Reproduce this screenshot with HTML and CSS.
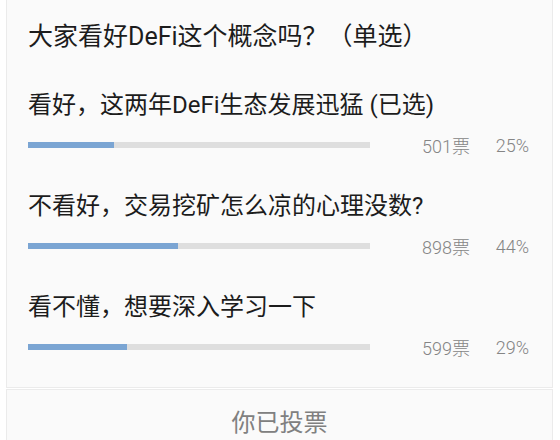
FILE: index.html
```html
<!DOCTYPE html>
<html lang="zh-CN">
<head>
    <meta charset="UTF-8">
    <meta name="viewport" content="width=device-width, initial-scale=1.0">
    <title>投票</title>
    <link rel="stylesheet" href="styles.css">
</head>
<body>
    <div class="poll">
        <div class="poll-card">
            <h1 class="poll-title">大家看好DeFi这个概念吗？（单选）</h1>

            <div class="option">
                <div class="option-text">看好，这两年DeFi生态发展迅猛 (已选)</div>
                <div class="option-stats">
                    <div class="track"><div class="fill" style="width: 25%"></div></div>
                    <span class="votes">501票</span>
                    <span class="percent">25%</span>
                </div>
            </div>

            <div class="option">
                <div class="option-text">不看好，交易挖矿怎么凉的心理没数?</div>
                <div class="option-stats">
                    <div class="track"><div class="fill" style="width: 44%"></div></div>
                    <span class="votes">898票</span>
                    <span class="percent">44%</span>
                </div>
            </div>

            <div class="option">
                <div class="option-text">看不懂，想要深入学习一下</div>
                <div class="option-stats">
                    <div class="track"><div class="fill" style="width: 29%"></div></div>
                    <span class="votes">599票</span>
                    <span class="percent">29%</span>
                </div>
            </div>
        </div>
        <div class="poll-footer">你已投票</div>
    </div>
</body>
</html>
```

FILE: styles.css
```css
body {
    margin: 0;
    padding: 0;
    background-color: #fff;
    font-family: Roboto, "Noto Sans CJK SC", sans-serif;
    color: #1c1c1c;
}
.poll {
    width: 547px;
    margin-left: 6px;
}
.poll-card {
    background-color: #fafafa;
    border: 1px solid #ebebeb;
    border-top: none;
    padding: 20px 22px 30px 21px;
}
.poll-title {
    margin: 0;
    font-size: 25px;
    font-weight: normal;
    line-height: 34px;
}
.option {
    padding-top: 35px;
}
.option-text {
    font-size: 24px;
    line-height: 32px;
}
.option-stats {
    display: flex;
    align-items: center;
    height: 20px;
    margin-top: 14px;
}
.track {
    width: 342px;
    height: 6px;
    background-color: #dedede;
}
.fill {
    height: 100%;
    background-color: #7ba5d3;
}
.votes, .percent {
    font-size: 18px;
    font-weight: 300;
    color: #858585;
    text-align: right;
}
.votes {
    width: 100px;
}
.percent {
    width: 59px;
}
.poll-footer {
    margin-top: 1px;
    height: 66px;
    line-height: 66px;
    background-color: #fafafa;
    border: 1px solid #ebebeb;
    text-align: center;
    font-size: 24px;
    color: #808080;
}
```
